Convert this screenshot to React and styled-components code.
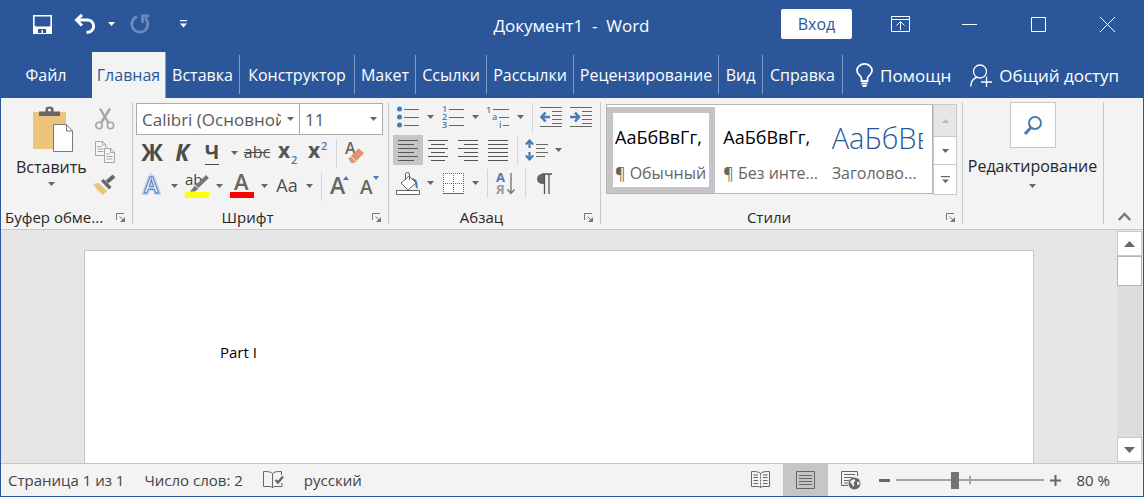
import React, { useState } from 'react';
import styled, { createGlobalStyle, css } from 'styled-components';

const blue = '#2b579a';
const accent = '#4a7ab5';
const ink = '#666666';
const line = '#c8c8c8';

const GlobalStyle = createGlobalStyle`
  * {
    box-sizing: border-box;
  }

  body {
    margin: 0;
    font-family: 'Open Sans', 'Noto Sans', sans-serif;
    font-size: 16px;
    color: #262626;
  }

  button,
  select,
  input {
    font: inherit;
    color: inherit;
    border: none;
    background: none;
    margin: 0;
    padding: 0;
  }

  button {
    cursor: pointer;
    white-space: nowrap;
  }

  svg {
    display: block;
    flex: none;
    overflow: visible;
  }
`;

const Window = styled.div`
  display: flex;
  flex-direction: column;
  height: 100vh;
  border: 1px solid ${blue};
  border-top: none;
  background: #f3f3f3;
  overflow: hidden;
`;

/* Title bar */

const TitleBar = styled.header`
  display: grid;
  grid-template-columns: 1fr auto 1fr;
  align-items: center;
  height: 52px;
  flex: none;
  padding: 0 1px 4px 0;
  background: ${blue};
  color: #fff;
`;

const QuickAccess = styled.div`
  display: flex;
  align-items: center;
  padding-left: 25px;
`;

const QuickButton = styled.button`
  display: flex;
  align-items: center;
  justify-content: center;
  width: ${props => props.$width || 32}px;
  height: 32px;
  margin-right: ${props => props.$gap || 0}px;
  opacity: ${props => (props.disabled ? 0.3 : 1)};
`;

const Title = styled.h1`
  margin: 3px 0 0;
  font-size: 17px;
  font-weight: 400;
  white-space: pre;
`;

const WindowControls = styled.div`
  display: flex;
  align-items: center;
  justify-content: flex-end;
`;

const SignIn = styled.button`
  width: 71px;
  height: 30px;
  margin-right: 14px;
  border-radius: 2px;
  background: #fff;
  color: ${blue};
`;

const ControlButton = styled.button`
  display: flex;
  align-items: center;
  justify-content: center;
  width: 69px;
  height: 40px;
`;

/* Tabs */

const TabBar = styled.nav`
  display: flex;
  height: 46px;
  flex: none;
  background: ${blue};
  color: #fff;
`;

const Tab = styled.button`
  width: ${props => props.$width}px;
  flex: none;
  margin: 3px 0 4px;
  border-right: 1px solid #7f9cc6;

  ${props => props.$plain && css`
    border-right-color: transparent;
  `}

  ${props => props.$active && css`
    margin: 0;
    background: #f3f3f3;
    color: ${blue};
  `}
`;

const TabAction = styled.button`
  display: flex;
  align-items: center;
  gap: 7px;
  margin-left: ${props => props.$gap}px;
  font-size: 17px;
`;

/* Ribbon */

const Ribbon = styled.div`
  display: flex;
  height: 132px;
  flex: none;
  padding: 4px 0 5px;
  border-bottom: 1px solid ${line};
`;

const Group = styled.section`
  display: flex;
  flex-direction: column;
  justify-content: space-between;
  width: ${props => props.$width}px;
  flex: ${props => (props.$grow ? '1 1 0' : 'none')};
  min-width: 0;
  padding: ${props => props.$pad || '0 5px 0 4px'};
  border-right: 1px solid ${line};
`;

const GroupFooter = styled.div`
  display: flex;
  align-items: center;
  justify-content: space-between;
  height: 20px;
  margin-bottom: -3px;
  font-size: 15px;
  white-space: nowrap;
`;

const GroupLabel = styled.span`
  flex: 1;
  padding-right: ${props => (props.$align ? 0 : 12)}px;
  text-align: ${props => props.$align || 'center'};
`;

const Launcher = styled.button`
  display: flex;
  padding: 2px;
`;

const ClipboardBody = styled.div`
  display: flex;
  justify-content: space-between;
  height: 98px;
`;

const StackButton = styled.button`
  display: flex;
  flex-direction: column;
  align-items: center;
  justify-content: flex-start;
  gap: ${props => props.$gap || 2}px;
  padding: ${props => props.$pad || '0'};
  line-height: 24px;
`;

const IconColumn = styled.div`
  display: flex;
  flex-direction: column;
  width: 36px;
  margin-right: 8px;
`;

const FontBody = styled.div`
  display: flex;
  flex-direction: column;
  gap: 3px;
`;

const Row = styled.div`
  display: flex;
  align-items: center;
  height: 30px;
`;

const ComboRow = styled.div`
  display: flex;
  margin: 1px 0 0 -1px;
`;

const Combo = styled.label`
  position: relative;
  display: block;
  flex: none;
  width: ${props => props.$width}px;
  height: 32px;
  border: 1px solid #ababab;
  background: #fff;

  & + & {
    border-left: none;
  }

  select {
    width: 100%;
    height: 100%;
    padding: 0 18px 0 5px;
    appearance: none;
    color: #595959;
    font-size: 17px;
  }

  svg {
    position: absolute;
    top: 13px;
    right: 5px;
    pointer-events: none;
  }
`;

const Tool = styled.button`
  display: flex;
  align-items: center;
  justify-content: center;
  width: ${props => props.$width || 30}px;
  height: ${props => props.$height || 30}px;
  flex: none;
  background: ${props => (props.$active ? '#c6c6c6' : 'none')};
`;

const Letter = styled.span`
  padding-bottom: 2px;
  font-size: ${props => props.$size || 20}px;
  font-weight: ${props => props.$weight || 700};
  font-style: ${props => (props.$italic ? 'italic' : 'normal')};
  line-height: 1;
  color: #4d4d4d;
  border-bottom: ${props => (props.$underline ? '1px solid #4d4d4d' : 'none')};
  text-decoration: ${props => (props.$strike ? 'line-through' : 'none')};
`;

const Separator = styled.span`
  width: 1px;
  height: 29px;
  flex: none;
  margin: 0 3px 0 4px;
  background: #d4d4d4;
`;

const Gallery = styled.div`
  display: flex;
  height: 90px;
  margin-top: 2px;
`;

const GalleryItems = styled.div`
  display: grid;
  grid-template-columns: repeat(3, 1fr);
  flex: 1;
  min-width: 0;
  padding-top: 2px;
  border: 1px solid #b4b8b1;
  background: #fff;
`;

const StyleCard = styled.button`
  display: flex;
  flex-direction: column;
  min-width: 0;
  overflow: hidden;
  padding: 0 3px 0 2px;
  border: 6px solid ${props => (props.$active ? '#c6c4c6' : 'transparent')};
  text-align: left;
`;

const Preview = styled.span`
  width: 100%;
  height: 48px;
  overflow: hidden;
  font-size: ${props => (props.$heading ? 29 : 18)}px;
  font-weight: ${props => (props.$heading ? 300 : 400)};
  line-height: 49px;
  color: ${props => (props.$heading ? blue : '#000')};
`;

const StyleName = styled.span`
  font-size: 16px;
  line-height: 24px;
  color: ${ink};
`;

const GalleryScroll = styled.div`
  display: grid;
  grid-template-rows: 33px 28px 30px;
  width: 24px;

  button {
    display: flex;
    align-items: center;
    justify-content: center;
    border: 1px solid ${line};
    border-top-width: 0;
    background: #fff;
  }

  button:first-child {
    border-top-width: 1px;
    background: #e6e6e6;
  }
`;

const SearchTile = styled.span`
  display: flex;
  align-items: center;
  justify-content: center;
  width: 46px;
  height: 46px;
  border: 1px solid ${line};
  background: #fff;
`;

const CollapseButton = styled.button`
  display: flex;
  align-items: flex-end;
  justify-content: center;
  width: 39px;
  padding: 0 0 3px 2px;
`;

/* Document */

const Workspace = styled.main`
  display: flex;
  flex: 1;
  min-height: 0;
  background: #e6e6e6;
`;

const Canvas = styled.div`
  display: flex;
  flex: 1;
  padding: 20px 83px 0;
`;

const Paper = styled.article`
  flex: 1;
  padding: 90px 135px 0;
  border: 1px solid #c6c6c6;
  border-bottom: none;
  background: #fff;
  color: #000;
  font-size: 15px;

  p {
    margin: 0;
    line-height: 22px;
  }
`;

const ScrollBar = styled.div`
  display: flex;
  flex-direction: column;
  width: 26px;
  padding: 1px 1px 1px 0;
`;

const ScrollButton = styled.button`
  display: flex;
  align-items: center;
  justify-content: center;
  height: 25px;
  border: 1px solid ${line};
  background: #fff;
`;

const ScrollTrack = styled.div`
  flex: 1;
  background: #dbdddf;
`;

const ScrollThumb = styled.div`
  height: 30px;
  border: 1px solid #b4b4b4;
  background: #fff;
`;

/* Status bar */

const StatusBar = styled.footer`
  display: flex;
  align-items: center;
  height: 33px;
  flex: none;
  padding: 0 33px 0 7px;
  border-top: 1px solid #c6c6c6;
  font-size: 15px;
  color: #444;
`;

const StatusInfo = styled.div`
  display: flex;
  align-items: center;
  gap: 20px;
  flex: 1;
  padding-bottom: 1px;
  white-space: nowrap;
`;

const ViewButton = styled(Tool)`
  width: 45px;
  height: 32px;
`;

const ZoomControl = styled.div`
  display: flex;
  align-items: center;
  gap: 6px;
  margin-left: 6px;
`;

const ZoomSlider = styled.input`
  width: 148px;
  height: 18px;
  appearance: none;
  background:
    linear-gradient(#a6a6a6, #a6a6a6) center / 2px 8px no-repeat,
    linear-gradient(#a6a6a6, #a6a6a6) center / 100% 2px no-repeat;

  &::-webkit-slider-thumb {
    appearance: none;
    width: 8px;
    height: 17px;
    background: #737373;
  }
`;

const ZoomValue = styled.span`
  width: 43px;
  padding-bottom: 1px;
  text-align: right;
  white-space: nowrap;
`;

/* Icons */

const Caret = ({ color = ink, up, width = 7, height = 4 }) => (
  <svg width={width} height={height} viewBox="0 0 7 4" preserveAspectRatio="none">
    <path d={up ? 'M0 4h7L3.5 0z' : 'M0 0h7L3.5 4z'} fill={color} />
  </svg>
);

const SaveIcon = () => (
  <svg width="19" height="19" viewBox="0 0 19 19">
    <path d="M.8 .8h17.4v17.4H.8z" fill="none" stroke="#fff" strokeWidth="1.6" />
    <path d="M1 10.5l2 1h13l2-1V18H1z" fill="#fff" />
    <path d="M5 14h8v4h-3v-3H8.500v3H5z" fill={blue} />
  </svg>
);

const UndoIcon = () => (
  <svg width="22" height="20" viewBox="0 0 22 20">
    <path d="M2 6h11.500a6 6 0 0 1 0 12.300h-1" fill="none" stroke="#fff" strokeWidth="3" />
    <path d="M8 .8L2.500 6 8 11.500" fill="none" stroke="#fff" strokeWidth="3" />
  </svg>
);

const RedoIcon = () => (
  <svg width="20" height="20" viewBox="0 0 20 20">
    <path d="M7 2.600a8 8 0 1 0 8 1.400" fill="none" stroke="#fff" strokeWidth="2.800" />
    <path d="M12.500 9V2H19" fill="none" stroke="#fff" strokeWidth="2.800" />
  </svg>
);

const CustomizeIcon = () => (
  <svg width="7" height="8" viewBox="0 0 7 8">
    <path d="M0 0h7v1.200H0zM0 3.500h7L3.500 7.500z" fill="#fff" />
  </svg>
);

const RibbonDisplayIcon = () => (
  <svg width="19" height="16" viewBox="0 0 19 16" fill="none" stroke="#fff">
    <path d="M.5 .5h18v15H.5zM.5 3.500h18M9.500 14V6M5.500 9.500l4-4 4 4" />
  </svg>
);

const MinimizeIcon = () => (
  <svg width="15" height="15" viewBox="0 0 15 15" stroke="#fff">
    <path d="M0 7.500h15" />
  </svg>
);

const MaximizeIcon = () => (
  <svg width="15" height="15" viewBox="0 0 15 15" stroke="#fff" fill="none">
    <path d="M.5 .5h14v14H.5z" />
  </svg>
);

const CloseIcon = () => (
  <svg width="15" height="15" viewBox="0 0 15 15" stroke="#fff">
    <path d="M0 0l15 15M15 0L0 15" />
  </svg>
);

const BulbIcon = () => (
  <svg width="17" height="24" viewBox="0 0 17 24" fill="none" stroke="#fff" strokeWidth="1.800">
    <path d="M5.500 18v-2.500C5.500 12.500 1 12 1 7.500a7.500 6.600 0 0 1 15 0c0 4.500-4.500 5-4.500 8V18zM5.500 20.500h6M6.500 23h4" />
  </svg>
);

const ShareIcon = () => (
  <svg width="22" height="23" viewBox="0 0 22 23" fill="none" stroke="#fff" strokeWidth="1.300">
    <circle cx="10" cy="7.500" r="6.500" />
    <path d="M.7 22.500c.3-5 3-8.500 7-9.500M11 18h11M16.500 12.500V23" />
  </svg>
);

const LauncherIcon = () => (
  <svg width="9" height="9" viewBox="0 0 9 9" fill="none" stroke="#777">
    <path d="M.5 7V.5H8M3.500 3.500l4 4" />
    <path d="M9 4v5H4z" fill="#777" stroke="none" />
  </svg>
);

const PasteIcon = () => (
  <svg width="46" height="46" viewBox="-4 0 46 46">
    <path d="M1 6h33v37H1z" fill="#ecc47c" />
    <path d="M7 10V5.500h6.500V3q0-2.500 4-2.500t4 2.500v2.500H28V10z" fill="#666" />
    <circle cx="17.500" cy="4" r="1.600" fill="#f3f3f3" />
    <path d="M21.500 18.500h13l6 6.500v20.500h-19z" fill="#fff" stroke="#777" />
    <path d="M34.500 18.500V25h6" fill="none" stroke="#777" />
  </svg>
);

const CutIcon = () => (
  <svg width="20" height="22" viewBox="0 0 20 22" fill="none" stroke="#a6a6a6" strokeWidth="2">
    <circle cx="4" cy="17.500" r="3.200" strokeWidth="1.600" />
    <circle cx="15.500" cy="17.500" r="3.200" strokeWidth="1.600" />
    <path d="M5 .5L13.500 15M15 .5L6 15" strokeWidth="2.400" />
  </svg>
);

const CopyIcon = () => (
  <svg width="20" height="22" viewBox="0 0 20 22" fill="#f5f5f5" stroke="#a6a6a6">
    <path d="M.5 .5h7l3.500 3.500v10.500H.5zM7.500 .5V4H11M2.500 5.500h4M2.500 8h6M2.500 10.500h6" />
    <path d="M9.500 7.500h6l4 4v10h-10zM15.500 7.500v4h4M11.500 13h3M11.500 15.500h6M11.500 18h6" />
  </svg>
);

const PainterIcon = () => (
  <svg width="23" height="20" viewBox="0 0 23 20">
    <path d="M0 9l6-1 8 8-4 4c-3-2-7-6-10-11z" fill="#ecc47c" />
    <path d="M8 6l2.500-2 8 8-2.500 2.500z" fill="#666" />
    <path d="M14 7l7-6" stroke="#666" strokeWidth="4" />
  </svg>
);

const SubIcon = ({ sup }) => (
  <svg width="19" height="22" viewBox="0 0 19 22">
    <text x="0" y="16" fontSize="21" fontWeight="700" fill="#555">x</text>
    <text x="13" y={sup ? 8 : 22} fontSize="11" fontWeight="600" fill={accent}>2</text>
  </svg>
);

const ClearIcon = () => (
  <svg width="20" height="22" viewBox="0 0 20 22">
    <text x="0" y="12" fontSize="16" fontWeight="600" fill="#666">A</text>
    <path d="M3.500 16.500L13.500 6.500l5.500 4.500-9.500 10H6z" fill="#df9470" />
    <path d="M5.500 14l5 5" stroke="#f3f3f3" />
  </svg>
);

const TextEffectIcon = () => (
  <svg width="18" height="20" viewBox="0 0 18 20">
    <text x="1" y="17" fontSize="22" fontWeight="600" fill="#fff" stroke="#c3d5ee" strokeWidth="4">A</text>
    <text x="1" y="17" fontSize="22" fontWeight="600" fill="#fff" stroke={accent} strokeWidth="1">A</text>
  </svg>
);

const HighlightIcon = () => (
  <svg width="24" height="24" viewBox="0 0 24 24">
    <text x="0" y="11" fontSize="15" fill="#444">ab</text>
    <path d="M22.500 2.500L12 12.500" stroke="#777" strokeWidth="4" />
    <path d="M10 11.500l3.500 3.500-4 2.500H5z" fill="#777" />
    <path d="M0 18h24v6H0z" fill="#ffff00" />
  </svg>
);

const FontColorIcon = () => (
  <svg width="24" height="24" viewBox="0 0 24 24">
    <text x="4" y="16" fontSize="22" fontWeight="600" fill="#666">A</text>
    <path d="M0 18h24v6H0z" fill="#ff0000" />
  </svg>
);

const ResizeIcon = ({ shrink }) => (
  <svg width="20" height="22" viewBox="0 0 20 22">
    <text x="0" y="19" fontSize={shrink ? 19 : 23} fontWeight="600" fill="#666">A</text>
    <path d={shrink ? 'M13 1h6l-3 4z' : 'M13 5h6l-3-4z'} fill={accent} />
  </svg>
);

const ListIcon = ({ numbered }) => (
  <svg width="22" height="22" viewBox="0 0 22 22">
    {[3, 11, 19].map((y, i) => (
      <g key={y}>
        {numbered
          ? <text x="0" y={y + 3} fontSize="9" fontWeight="600" fill={accent}>{i + 1}</text>
          : <circle cx="2.500" cy={y} r="2.500" fill={accent} />}
        <path d={`M7 ${y + 0.5}h15`} stroke={ink} />
      </g>
    ))}
  </svg>
);

const MultilevelIcon = () => (
  <svg width="24" height="22" viewBox="0 0 24 22" fill={accent} fontSize="9" fontWeight="600">
    <text x="0" y="7">1</text>
    <text x="6" y="14">a</text>
    <text x="13" y="22">i</text>
    <path d="M7 3.500h16M13 11.500h10M17 19.500h6" stroke={ink} />
  </svg>
);

const IndentIcon = ({ right }) => (
  <svg width="22" height="22" viewBox="0 0 22 22">
    <path d="M0 1.500h22M12 5.500h10M12 9.500h10M12 13.500h10M12 17.500h10M0 20.500h22" stroke={ink} />
    <path
      d={right ? 'M0 11h8M5 6.500l4 4.500-4 4.500' : 'M10 11H2M5.500 6.500L1.500 11l4 4.500'}
      fill="none"
      stroke={accent}
      strokeWidth="2.600"
    />
  </svg>
);

const alignments = {
  left: [[0, 20], [0, 16], [0, 20], [0, 16], [0, 20], [0, 16]],
  center: [[0, 20], [3, 17], [0, 20], [3, 17], [0, 20], [3, 17]],
  right: [[0, 20], [6, 20], [0, 20], [6, 20], [0, 20], [6, 20]],
  justify: [[0, 20], [0, 20], [0, 20], [0, 20], [0, 20], [0, 20]],
};

const AlignIcon = ({ type }) => (
  <svg width="20" height="21" viewBox="0 0 20 21">
    {alignments[type].map(([from, to], i) => (
      <path key={i} d={`M${from} ${i * 4 + 0.5}H${to}`} stroke="#555" />
    ))}
  </svg>
);

const SpacingIcon = () => (
  <svg width="23" height="22" viewBox="0 0 23 22">
    <path d="M4.500 2v7M4.500 13v7M.8 5.500L4.500 1.500l3.700 4M.8 16.500l3.700 4 3.700-4" fill="none" stroke={accent} strokeWidth="2.200" />
    <path d="M11 5.500h12M11 9.500h9M11 13.500h12M11 17.500h9" stroke={ink} />
  </svg>
);

const FillIcon = () => (
  <svg width="24" height="23" viewBox="0 0 24 23">
    <path d="M5 11l8-7 7 7-8 7z" fill="#fff" stroke={ink} />
    <path d="M9.500 8V2q0-1.500 2-1.500t2 1.500v6" fill="none" stroke={ink} />
    <path d="M16 6c5 1 6 4 5.500 11-2-1-2.500-4-2-6z" fill={accent} />
    <path d="M.5 18.500h23v4H.5z" fill="#fff" stroke={ink} />
  </svg>
);

const BordersIcon = () => (
  <svg width="21" height="21" viewBox="0 0 21 21" fill="none" stroke={ink}>
    <path d="M.5 .5h20v20H.5z" fill="#fff" stroke="none" />
    <path d="M0 .5h21M.5 0v21M20.500 0v21M10.500 0v21M0 10.500h21" strokeDasharray="1 1" />
    <path d="M0 20.500h21" />
  </svg>
);

const SortIcon = () => (
  <svg width="20" height="23" viewBox="0 0 20 23">
    <text x="0" y="10" fontSize="13" fontWeight="700" fill={accent}>А</text>
    <text x="0" y="22" fontSize="13" fontWeight="700" fill="#999">Я</text>
    <path d="M15 1v20M11.500 17.500l3.500 4 3.500-4" fill="none" stroke="#777" strokeWidth="1.400" />
  </svg>
);

const PilcrowIcon = () => (
  <svg width="16" height="21" viewBox="0 0 16 21">
    <path d="M8 1H6a5 5 0 0 0 0 10h2z" fill="#666" />
    <path d="M6 1h10M8.500 1v20M13 1v20" stroke="#555" strokeWidth="1.300" />
  </svg>
);

const MoreIcon = () => (
  <svg width="9" height="8" viewBox="0 0 9 8">
    <path d="M0 0h9v1.200H0zM1 3.500h7L4.500 7z" fill={ink} />
  </svg>
);

const SearchIcon = () => (
  <svg width="18" height="19" viewBox="0 0 18 19" fill="none" stroke={accent}>
    <circle cx="11" cy="7" r="6" strokeWidth="2" />
    <path d="M7 11.500L1 18" strokeWidth="3" />
  </svg>
);

const ChevronIcon = () => (
  <svg width="13" height="9" viewBox="0 0 13 9">
    <path d="M.8 8l5.700-6 5.700 6" fill="none" stroke="#777" strokeWidth="2.400" />
  </svg>
);

const ProofIcon = () => (
  <svg width="21" height="18" viewBox="0 0 21 18" fill="none" stroke={ink}>
    <path d="M9.500 2.500C8 .5 4 .5.5 .5v15h7.500l1.500 1.500 1.500-1.500h8V12M9.500 2.500V17M9.500 2.500C11 .5 15 .5 18.500 .5V4" />
    <path d="M12.500 9l2.500 2.500 5-6" strokeWidth="2.400" />
  </svg>
);

const ReadIcon = () => (
  <svg width="19" height="18" viewBox="0 0 19 18" fill="none" stroke={ink}>
    <path d="M9.500 2.500C8 .5 4 .5.5 .5v15h7.500l1.500 1.500 1.500-1.500h7.500V.5c-3.500 0-7.500 0-9 2z" />
    <path d="M9.500 2.500V17" strokeDasharray="2 1" />
    <path d="M2.500 4h4.500M2.500 6.500h4.500M2.500 9.500h4.500M2.500 12.500h4.500M12 4h4.500M12 6.500h4.500M12 9.500h4.500M12 12.500h4.500" />
  </svg>
);

const PrintIcon = () => (
  <svg width="19" height="18" viewBox="0 0 19 18" fill="none" stroke={ink}>
    <path d="M.5 .5h18v17H.5zM3 4.500h13M3 7.500h13M3 10.500h13M3 13.500h13" />
  </svg>
);

const WebIcon = () => (
  <svg width="20" height="19" viewBox="0 0 20 19" fill="none" stroke={ink}>
    <path d="M7 14.500H.5V.5h16V5M3 3.500h11M3 6.500h9M3 9.500h5M3 12h4" />
    <circle cx="13.500" cy="12.500" r="6" fill="#666" stroke="none" />
    <path d="M10 9.500l3-1.500 1.500 2-2 1.500 1 2.500-1.500 2-1-3-2-1.500zM16 11l2.500-.5v3l-2 1z" fill="#f3f3f3" stroke="none" />
  </svg>
);

const ZoomSign = ({ plus }) => (
  <svg width="11" height="11" viewBox="0 0 11 11" stroke="#666" strokeWidth={plus ? 2 : 3}>
    <path d={plus ? 'M0 5.500h11M5.500 0v11' : 'M0 5.500h11'} />
  </svg>
);

const tabs = [
  { name: 'Файл', width: 91, plain: true },
  { name: 'Главная', width: 74 },
  { name: 'Вставка', width: 74 },
  { name: 'Конструктор', width: 115 },
  { name: 'Макет', width: 61 },
  { name: 'Ссылки', width: 71 },
  { name: 'Рассылки', width: 87 },
  { name: 'Рецензирование', width: 145 },
  { name: 'Вид', width: 44 },
  { name: 'Справка', width: 80 },
];

const textStyles = [
  { name: '¶ Обычный', sample: 'АаБбВвГг,' },
  { name: '¶ Без инте...', sample: 'АаБбВвГг,' },
  { name: 'Заголово...', sample: 'АаБбВв', heading: true },
];

const CaretButton = ({ label }) => (
  <Tool $width={15} aria-label={label}>
    <Caret />
  </Tool>
);

const Footer = ({ label, align }) => (
  <GroupFooter>
    <GroupLabel $align={align}>{label}</GroupLabel>
    <Launcher aria-label={`${label}: параметры`}><LauncherIcon /></Launcher>
  </GroupFooter>
);

function ClipboardGroup() {
  return (
    <Group $width={132}>
      <ClipboardBody>
        <StackButton $gap={3} $pad="4px 0 0 11px">
          <PasteIcon />
          Вставить
          <Caret />
        </StackButton>
        <IconColumn>
          <Tool $width={36} $height={33} aria-label="Вырезать"><CutIcon /></Tool>
          <Tool $width={36} $height={33} aria-label="Копировать"><CopyIcon /></Tool>
          <Tool $width={36} $height={33} aria-label="Формат по образцу"><PainterIcon /></Tool>
        </IconColumn>
      </ClipboardBody>
      <Footer label="Буфер обме..." align="left" />
    </Group>
  );
}

function FontGroup() {
  return (
    <Group $width={256}>
      <FontBody>
        <ComboRow>
          <Combo $width={164}>
            <select aria-label="Шрифт">
              <option>Calibri (Основной текст)</option>
            </select>
            <Caret />
          </Combo>
          <Combo $width={83}>
            <select aria-label="Размер шрифта">
              <option>11</option>
            </select>
            <Caret />
          </Combo>
        </ComboRow>
        <Row>
          <Tool aria-label="Полужирный"><Letter $size={23}>Ж</Letter></Tool>
          <Tool aria-label="Курсив"><Letter $size={23} $italic>К</Letter></Tool>
          <Tool aria-label="Подчеркнутый"><Letter $underline>Ч</Letter></Tool>
          <CaretButton label="Вид подчеркивания" />
          <Tool aria-label="Зачеркнутый"><Letter $size={16} $weight={400} $strike>abc</Letter></Tool>
          <Tool aria-label="Подстрочный"><SubIcon /></Tool>
          <Tool aria-label="Надстрочный"><SubIcon sup /></Tool>
          <Separator />
          <Tool aria-label="Удалить форматирование"><ClearIcon /></Tool>
        </Row>
        <Row>
          <Tool aria-label="Текстовые эффекты"><TextEffectIcon /></Tool>
          <CaretButton label="Вид эффекта" />
          <Tool aria-label="Цвет выделения"><HighlightIcon /></Tool>
          <CaretButton label="Выбрать цвет выделения" />
          <Tool aria-label="Цвет текста"><FontColorIcon /></Tool>
          <CaretButton label="Выбрать цвет текста" />
          <Tool aria-label="Регистр"><Letter $size={18} $weight={500}>Aa</Letter></Tool>
          <CaretButton label="Выбрать регистр" />
          <Separator />
          <Tool aria-label="Увеличить размер"><ResizeIcon /></Tool>
          <Tool aria-label="Уменьшить размер"><ResizeIcon shrink /></Tool>
        </Row>
      </FontBody>
      <Footer label="Шрифт" />
    </Group>
  );
}

function ParagraphGroup() {
  const [align, setAlign] = useState('left');

  return (
    <Group $width={212}>
      <FontBody>
        <Row>
          <Tool aria-label="Маркеры"><ListIcon /></Tool>
          <CaretButton label="Вид маркеров" />
          <Tool aria-label="Нумерация"><ListIcon numbered /></Tool>
          <CaretButton label="Вид нумерации" />
          <Tool aria-label="Многоуровневый список"><MultilevelIcon /></Tool>
          <CaretButton label="Вид списка" />
          <Separator />
          <Tool aria-label="Уменьшить отступ"><IndentIcon /></Tool>
          <Tool aria-label="Увеличить отступ"><IndentIcon right /></Tool>
        </Row>
        <Row>
          {Object.keys(alignments).map(type => (
            <Tool key={type} $active={align === type} onClick={() => setAlign(type)} aria-label={type}>
              <AlignIcon type={type} />
            </Tool>
          ))}
          <Separator />
          <Tool aria-label="Интервал"><SpacingIcon /></Tool>
          <CaretButton label="Выбрать интервал" />
        </Row>
        <Row>
          <Tool aria-label="Заливка"><FillIcon /></Tool>
          <CaretButton label="Цвет заливки" />
          <Tool aria-label="Границы"><BordersIcon /></Tool>
          <CaretButton label="Вид границ" />
          <Separator />
          <Tool aria-label="Сортировка"><SortIcon /></Tool>
          <Separator />
          <Tool aria-label="Знаки абзаца"><PilcrowIcon /></Tool>
        </Row>
      </FontBody>
      <Footer label="Абзац" />
    </Group>
  );
}

function StylesGroup() {
  const [selected, setSelected] = useState(0);

  return (
    <Group $grow $pad="0 5px">
      <Gallery>
        <GalleryItems>
          {textStyles.map((item, i) => (
            <StyleCard key={item.name} $active={selected === i} onClick={() => setSelected(i)}>
              <Preview $heading={item.heading}>{item.sample}</Preview>
              <StyleName>{item.name}</StyleName>
            </StyleCard>
          ))}
        </GalleryItems>
        <GalleryScroll>
          <button aria-label="Вверх" disabled><Caret up color="#b8b8b8" /></button>
          <button aria-label="Вниз"><Caret /></button>
          <button aria-label="Дополнительно"><MoreIcon /></button>
        </GalleryScroll>
      </Gallery>
      <Footer label="Стили" />
    </Group>
  );
}

export default function App() {
  const [active, setActive] = useState('Главная');
  const [zoom, setZoom] = useState(39);

  return (
    <Window>
      <GlobalStyle />
      <TitleBar>
        <QuickAccess>
          <QuickButton aria-label="Сохранить" $gap={11}><SaveIcon /></QuickButton>
          <QuickButton aria-label="Отменить"><UndoIcon /></QuickButton>
          <QuickButton aria-label="Список отмены" $width={20} $gap={3}><Caret color="#fff" /></QuickButton>
          <QuickButton aria-label="Повторить" $gap={19} disabled><RedoIcon /></QuickButton>
          <QuickButton aria-label="Настройка панели" $width={16}><CustomizeIcon /></QuickButton>
        </QuickAccess>
        <Title>{'Документ1\u00a0 -\u00a0 Word'}</Title>
        <WindowControls>
          <SignIn>Вход</SignIn>
          <ControlButton aria-label="Параметры ленты"><RibbonDisplayIcon /></ControlButton>
          <ControlButton aria-label="Свернуть"><MinimizeIcon /></ControlButton>
          <ControlButton aria-label="Развернуть"><MaximizeIcon /></ControlButton>
          <ControlButton aria-label="Закрыть"><CloseIcon /></ControlButton>
        </WindowControls>
      </TitleBar>

      <TabBar>
        {tabs.map(tab => (
          <Tab
            key={tab.name}
            $width={tab.width}
            $plain={tab.plain}
            $active={active === tab.name}
            onClick={() => setActive(tab.name)}
          >
            {tab.name}
          </Tab>
        ))}
        <TabAction $gap={13}><BulbIcon />Помощн</TabAction>
        <TabAction $gap={19}><ShareIcon />Общий доступ</TabAction>
      </TabBar>

      <Ribbon>
        <ClipboardGroup />
        <FontGroup />
        <ParagraphGroup />
        <StylesGroup />
        <Group $width={141} $pad="0 1px 0 0">
          <StackButton $gap={6}>
            <SearchTile><SearchIcon /></SearchTile>
            Редактирование
            <Caret />
          </StackButton>
        </Group>
        <CollapseButton aria-label="Свернуть ленту"><ChevronIcon /></CollapseButton>
      </Ribbon>

      <Workspace>
        <Canvas>
          <Paper>
            <p>Part I</p>
          </Paper>
        </Canvas>
        <ScrollBar>
          <ScrollButton aria-label="Прокрутить вверх"><Caret up width={11} height={6} /></ScrollButton>
          <ScrollTrack><ScrollThumb /></ScrollTrack>
          <ScrollButton aria-label="Прокрутить вниз"><Caret width={11} height={6} /></ScrollButton>
        </ScrollBar>
      </Workspace>

      <StatusBar>
        <StatusInfo>
          <span>Страница 1 из 1</span>
          <span>Число слов: 2</span>
          <ProofIcon />
          <span>русский</span>
        </StatusInfo>
        <ViewButton aria-label="Режим чтения"><ReadIcon /></ViewButton>
        <ViewButton aria-label="Разметка страницы" $active><PrintIcon /></ViewButton>
        <ViewButton aria-label="Веб-документ"><WebIcon /></ViewButton>
        <ZoomControl>
          <button aria-label="Уменьшить"><ZoomSign /></button>
          <ZoomSlider
            type="range"
            aria-label="Масштаб"
            value={zoom}
            onChange={e => setZoom(Number(e.target.value))}
          />
          <button aria-label="Увеличить"><ZoomSign plus /></button>
          <ZoomValue>80 %</ZoomValue>
        </ZoomControl>
      </StatusBar>
    </Window>
  );
}
